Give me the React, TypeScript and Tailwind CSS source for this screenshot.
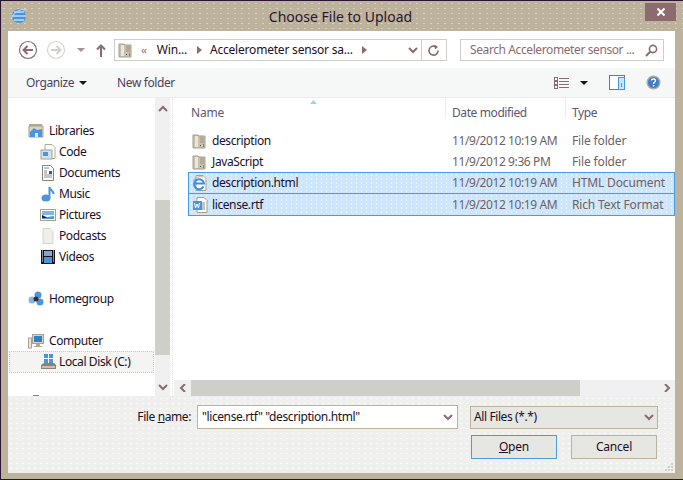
import React from "react";

const Folder = () => (
  <svg width="16" height="16" viewBox="0 0 16 16" className="shrink-0">
    <path d="M1 2h5l1 1h6v12H1z" fill="#c9c1ae" stroke="#a89f8c" />
    <rect x="3" y="3" width="3" height="11" fill="#e9e6dd" />
    <rect x="8" y="4" width="4" height="6" fill="#b4a994" />
    <rect x="11" y="11" width="1" height="3" fill="#4a95dc" />
    <rect x="8" y="12" width="1" height="1" fill="#555" />
  </svg>
);

const PageIe = () => (
  <svg width="16" height="16" viewBox="0 0 16 16" className="shrink-0">
    <path d="M4 .5h7l3 3v12H4z" fill="#fff" stroke="#a89f8c" />
    <path d="M11.500 11.500A5 5 0 1 1 12 8.500H2.500" fill="none" stroke="#3f8fe0" strokeWidth="2" />
    <path d="M1 6c2-4 7-5 10-4" fill="none" stroke="#b4a994" />
  </svg>
);

const PageWord = () => (
  <svg width="16" height="16" viewBox="0 0 16 16" className="shrink-0">
    <path d="M5 .5h7l3 3v12H5z" fill="#fff" stroke="#a89f8c" />
    <path d="M10 6h3M10 8h3M10 10h3M10 12h3" stroke="#8b8b8b" />
    <rect x="1" y="4" width="9" height="9" fill="#4a95dc" />
    <path d="M2.500 6l1 5 1.500-4 1.500 4 1-5" fill="none" stroke="#fff" />
  </svg>
);

const NavIcon = ({ kind }: { kind: string }) => {
  const common = { width: 16, height: 16, viewBox: "0 0 16 16", className: "shrink-0" };
  switch (kind) {
    case "libraries":
      return (
        <svg {...common}>
          <path d="M1 1h13v2H1z" fill="#b4a994" />
          <path d="M1 3h14v11H1z" fill="#d9d4c6" stroke="#a89f8c" />
          <path d="M2 9l4-4 3 2 5-1v8H2z" fill="#4a95dc" />
          <rect x="7" y="10" width="3" height="4" fill="#e9e6dd" />
        </svg>
      );
    case "code":
      return (
        <svg {...common}>
          <path d="M5 .5h7l3 3v11H5z" fill="#fff" stroke="#b4a994" />
          <rect x="1" y="6" width="11" height="9" fill="#cfe3f6" stroke="#a89f8c" />
          <rect x="3" y="8" width="5" height="4" fill="#4a95dc" />
        </svg>
      );
    case "documents":
      return (
        <svg {...common}>
          <path d="M2.500 .5h8l3 3v12h-11z" fill="#fff" stroke="#8c7f78" />
          <path d="M4 3h5" stroke="#4a95dc" />
          <path d="M4 6h3M4 8h3M4 10h8M4 12h8" stroke="#8b8b8b" />
          <rect x="9" y="6" width="3" height="3" fill="#3a5a8c" />
        </svg>
      );
    case "music":
      return (
        <svg {...common}>
          <ellipse cx="6" cy="12" rx="4.500" ry="3.500" fill="#4a95dc" />
          <path d="M9.500 12V1c0 3 4 3 4 7" fill="none" stroke="#4a95dc" strokeWidth="2" />
        </svg>
      );
    case "pictures":
      return (
        <svg {...common}>
          <rect x="0.5" y="2.500" width="15" height="11" fill="#fff" stroke="#a89f8c" />
          <rect x="2" y="4" width="12" height="4" fill="#7fb6e8" />
          <path d="M2 8l5 2 7-1v3H2z" fill="#4a95dc" />
          <path d="M2 8l5 3H2z" fill="#2a2030" />
        </svg>
      );
    case "podcasts":
      return (
        <svg {...common}>
          <path d="M3 .5h7l3 3v12H3z" fill="#f0efeb" stroke="#d9d4c6" />
        </svg>
      );
    case "videos":
      return (
        <svg {...common}>
          <rect x="1" y="1" width="14" height="14" fill="#1a1020" />
          <rect x="4" y="2" width="8" height="5" fill="#7fa9d0" />
          <rect x="4" y="8" width="8" height="6" fill="#4a95dc" />
          <path d="M2 2h1M2 4h1M2 6h1M2 8h1M2 10h1M2 12h1M13 2h1M13 4h1M13 6h1M13 8h1M13 10h1M13 12h1" stroke="#fff" />
        </svg>
      );
    case "homegroup":
      return (
        <svg {...common}>
          <circle cx="10" cy="4" r="3.500" fill="#4a95dc" />
          <circle cx="4" cy="9" r="3.500" fill="#7fb6e8" />
          <circle cx="12" cy="11" r="3.500" fill="#4a95dc" />
          <circle cx="8" cy="8" r="2.500" fill="#3a2a35" />
        </svg>
      );
    case "computer":
      return (
        <svg {...common}>
          <rect x="0.5" y="5" width="3" height="10" fill="#e9e6dd" stroke="#a89f8c" />
          <rect x="4.500" y="1.500" width="11" height="9" fill="#d9d4c6" stroke="#a89f8c" />
          <rect x="6" y="3" width="8" height="6" fill="#2f7fc9" />
          <path d="M8 11h4v2h2v1H6v-1h2z" fill="#b4a994" />
        </svg>
      );
    default:
      return (
        <svg {...common}>
          <rect x="4" y="0" width="4" height="4" fill="#4a95dc" />
          <rect x="9" y="0" width="4" height="4" fill="#4a95dc" />
          <rect x="4" y="5" width="4" height="4" fill="#4a95dc" />
          <rect x="9" y="5" width="4" height="4" fill="#4a95dc" />
          <path d="M1 11l3-2h10l2 2v4H1z" fill="#8c7f78" />
          <rect x="2" y="12" width="13" height="2" fill="#c9c1ae" />
        </svg>
      );
  }
};

const Caret = ({ color = "#1a0f26" }: { color?: string }) => (
  <svg width="8" height="4" viewBox="0 0 8 4" className="shrink-0">
    <path d="M0 0h8L4 4z" fill={color} />
  </svg>
);

const Chevron = ({ dir }: { dir: "up" | "down" | "left" | "right" }) => {
  const d = {
    up: "M1 6l4-4 4 4",
    down: "M1 2l4 4 4-4",
    left: "M7 0L3 4l4 4",
    right: "M3 0l4 4-4 4",
  }[dir];
  return (
    <svg width="10" height="8" viewBox="0 0 10 8" className="shrink-0">
      <path d={d} fill="none" stroke="#8b6b70" strokeWidth="2" />
    </svg>
  );
};

const navGroups = [
  { gap: "mt-[21px]", items: [["libraries", "Libraries", 0], ["code", "Code", 1], ["documents", "Documents", 1], ["music", "Music", 1], ["pictures", "Pictures", 1], ["podcasts", "Podcasts", 1], ["videos", "Videos", 1]] },
  { gap: "mt-[21px]", items: [["homegroup", "Homegroup", 0]] },
  { gap: "mt-[21px]", items: [["computer", "Computer", 0]] },
] as const;

const files = [
  { name: "description", date: "11/9/2012 10:19 AM", type: "File folder", icon: <Folder />, sel: false },
  { name: "JavaScript", date: "11/9/2012 9:36 PM", type: "File folder", icon: <Folder />, sel: false },
  { name: "description.html", date: "11/9/2012 10:19 AM", type: "HTML Document", icon: <PageIe />, sel: true },
  { name: "license.rtf", date: "11/9/2012 10:19 AM", type: "Rich Text Format", icon: <PageWord />, sel: true },
];

export default function App() {
  return (
    <div
      className="w-[683px] h-[480px] flex flex-col bg-[#bdb29c] border-l border-b border-t border-[#2a1530] overflow-hidden text-[12px] tracking-[-0.4px] text-[#1a0f26]"
      style={{ fontFamily: '"Noto Sans", sans-serif' }}
    >
      {/* Title bar */}
      <div className="h-[30px] shrink-0 flex items-start pl-[9px] pr-[7px] bg-[radial-gradient(#d6d0c0_1px,transparent_1px)] bg-[length:7px_5px]">
        <svg width="18" height="18" viewBox="0 0 18 18" className="mt-[6px] shrink-0">
          <circle cx="9" cy="9" r="7" fill="#3f97e6" />
          <path d="M2 9h14M4 5h10M4 13h10" stroke="#fff" />
          <path d="M1 12C5 3 13 1 17 3" fill="none" stroke="#bfe0f8" />
        </svg>
        <div className="flex-1 text-center text-[14px] tracking-normal leading-[31px] pl-[8px] text-[#2a1530]">Choose File to Upload</div>
        <div className="w-[31px] h-[18px] mt-[2px] bg-[#8b6b70] flex items-center justify-center">
          <svg width="8" height="8" viewBox="0 0 8 8">
            <path d="M0.5 0.5l7 7M7.500 0.5l-7 7" stroke="#fff" strokeWidth="2" />
          </svg>
        </div>
      </div>

      {/* Client */}
      <div className="ml-[7px] mr-[8px] flex-1 min-h-0 flex flex-col bg-white">
        {/* Address row */}
        <div className="h-[37px] shrink-0 flex items-center pl-[10px] pr-[11px] pt-[1px]">
          <svg width="20" height="20" viewBox="0 0 20 20" className="shrink-0">
            <circle cx="10" cy="10" r="8.500" fill="#fff" stroke="#8b6b70" strokeWidth="1.200" />
            <path d="M15 10H6M9.500 6l-4 4 4 4" fill="none" stroke="#8b6b70" strokeWidth="2" />
          </svg>
          <svg width="20" height="20" viewBox="0 0 20 20" className="ml-[8px] shrink-0">
            <circle cx="10" cy="10" r="8.500" fill="#fff" stroke="#d9d6cf" strokeWidth="1.200" />
            <path d="M5 10h9M10.500 6l4 4-4 4" fill="none" stroke="#d4d1ca" strokeWidth="2" />
          </svg>
          <div className="ml-[11px]"><Caret color="#a98d90" /></div>
          <svg width="10" height="13" viewBox="0 0 10 13" className="ml-[11px] shrink-0">
            <path d="M5 13V2M1 5.500L5 1.500l4 4" fill="none" stroke="#8b6b70" strokeWidth="2" />
          </svg>
          <div className="ml-[8px] w-[333px] h-[22px] shrink-0 flex items-center border border-[#cfcfca]">
            <div className="ml-[3px]"><Folder /></div>
            <span className="ml-[7px] text-[#8b6b70] text-[11px] tracking-[-1px]">‹‹</span>
            <span className="ml-[11px] tracking-[-0.2px]">Win...</span>
            <svg width="5" height="8" viewBox="0 0 5 8" className="ml-[10px]"><path d="M0 0l5 4-5 4z" fill="#8b6b70" /></svg>
            <span className="ml-[8px] whitespace-nowrap tracking-[-0.2px]">Accelerometer sensor sa...</span>
            <svg width="5" height="8" viewBox="0 0 5 8" className="ml-[9px]"><path d="M0 0l5 4-5 4z" fill="#8b6b70" /></svg>
            <div className="flex-1" />
            <Chevron dir="down" />
            <div className="ml-[3px] w-[25px] h-full border-l border-[#cfcfca] flex items-center justify-center">
              <svg width="12" height="13" viewBox="0 0 12 13">
                <path d="M10 6.500a4.500 4.500 0 1 1-2-3.600" fill="none" stroke="#8b6b70" strokeWidth="1.600" />
                <path d="M6.500 0.500l3.500 2.500-3 2.500z" fill="#8b6b70" />
              </svg>
            </div>
          </div>
          <div className="ml-[13px] flex-1 h-[22px] flex items-center border border-[#cfcfca] pl-[9px] pr-[5px] text-[#8b6b70]">
            <span className="flex-1 whitespace-nowrap overflow-hidden">Search Accelerometer sensor ...</span>
            <svg width="13" height="13" viewBox="0 0 13 13" className="shrink-0">
              <circle cx="8" cy="5" r="3.600" fill="none" stroke="#8b6b70" strokeWidth="1.600" />
              <path d="M5.500 7.500L1 12" stroke="#8b6b70" strokeWidth="2" />
            </svg>
          </div>
        </div>

        {/* Toolbar */}
        <div className="h-[30px] shrink-0 flex items-center bg-[#f6f7f7] border-b border-[#e3eef8] pl-[18px] pr-[14px]">
          <span className="text-[#4a4360]">Organize</span>
          <div className="ml-[5px]"><Caret /></div>
          <span className="ml-[30px] text-[#4a4360]">New folder</span>
          <div className="flex-1" />
          <svg width="15" height="12" viewBox="0 0 15 12" className="shrink-0">
            <path d="M5 1.500h10M5 4.500h10M5 7.500h10M5 10.500h10" stroke="#8b6b70" />
            <rect x="0.5" y="0.5" width="3" height="3" fill="#fff" stroke="#8b6b70" />
            <rect x="0.5" y="4.500" width="3" height="3" fill="#fff" stroke="#8b6b70" />
            <rect x="0.5" y="8.500" width="3" height="3" fill="#fff" stroke="#8b6b70" />
          </svg>
          <div className="ml-[11px]"><Caret /></div>
          <svg width="16" height="15" viewBox="0 0 16 15" className="ml-[21px] shrink-0">
            <rect x="0.5" y="0.5" width="15" height="14" fill="#fff" stroke="#8b6b70" />
            <rect x="9.500" y="2.500" width="6" height="12" fill="#cfe3f6" stroke="#3f97e6" />
            <path d="M12.500 8v4" stroke="#3f97e6" />
          </svg>
          <svg width="15" height="15" viewBox="0 0 15 15" className="ml-[21px] shrink-0">
            <circle cx="7.500" cy="7.500" r="7" fill="#b4a994" />
            <circle cx="7.500" cy="7.500" r="5.500" fill="#3f7fc9" />
            <path d="M5.500 5.500c0-2 4-2 4 0s-2 1.500-2 3.500" fill="none" stroke="#fff" strokeWidth="1.300" />
            <rect x="6.800" y="10" width="1.500" height="1.500" fill="#fff" />
          </svg>
        </div>

        {/* Main */}
        <div className="h-[298px] shrink-0 flex">
          {/* Sidebar */}
          <div className="w-[147px] shrink-0 overflow-hidden pt-[11px] pl-[1px] pr-[1px]">
            {navGroups.map((g, i) => (
              <div key={i} className={i === 0 ? "mt-[11px]" : g.gap}>
                {g.items.map(([icon, label, indent]) => (
                  <div key={label} className={`h-[21px] flex items-center whitespace-nowrap ${indent ? "pl-[31px] gap-[3px]" : "pl-[19px] gap-[5px]"}`}>
                    <NavIcon kind={icon} />
                    <span>{label}</span>
                  </div>
                ))}
              </div>
            ))}
            <div className="h-[22px] flex items-center gap-[3px] pl-[30px] border border-dotted border-[#c8c8c4] bg-[#f4f4f3] whitespace-nowrap">
              <NavIcon kind="disk" />
              <span>Local Disk (C:)</span>
            </div>
            <div className="mt-[22px] ml-[24px] w-[6px] h-[2px] bg-[#4a95dc]" />
          </div>

          {/* Sidebar scrollbar */}
          <div className="w-[15px] shrink-0 bg-[#f0f0f0] flex flex-col items-center">
            <div className="h-[17px] pt-[4px] flex items-center"><Chevron dir="up" /></div>
            <div className="flex-1 w-full mt-[85px] flex flex-col">
              <div className="h-[155px] bg-[#cfcfca]" />
            </div>
            <div className="h-[17px] flex items-center pb-[1px]"><Chevron dir="down" /></div>
          </div>
          <div className="w-[3px] shrink-0 bg-white border-r border-dotted border-[#e4e4e2]" />

          {/* List */}
          <div className="flex-1 min-w-0 flex flex-col pl-[1px]">
            <div className="h-[20px] shrink-0 flex text-[#5d5670] whitespace-nowrap">
              <div className="w-[272px] pl-[17px] pt-[5px] leading-[20px] relative border-r border-[#e3eef8] tracking-[-0.2px]">
                Name
                <svg width="7" height="4" viewBox="0 0 7 4" className="absolute top-[2px] left-[136px]">
                  <path d="M0 4l3.500-4L7 4z" fill="#a9cdee" />
                </svg>
              </div>
              <div className="w-[120px] pl-[6px] pt-[5px] leading-[20px] border-r border-[#e3eef8]">Date modified</div>
              <div className="pl-[6px] pt-[5px] leading-[20px]">Type</div>
            </div>
            <div className="flex-1 min-h-0 pt-[12px] pl-[14px] overflow-hidden">
              {files.map((f, i) => (
                <div
                  key={f.name}
                  className={`flex items-center whitespace-nowrap h-[21px] ${
                    f.sel
                      ? `bg-[#cde6fb] border-x border-b border-[#4a9be0] ${i === 2 ? "border-t h-[22px]" : "h-[22px]"} bg-[radial-gradient(#e6f2fc_1px,transparent_1px)] bg-[length:5px_4px]`
                      : "border-x border-transparent"
                  }`}
                >
                  <div className="w-[263px] flex items-center gap-[4px] pl-[3px]">
                    {f.icon}
                    <span>{f.name}</span>
                  </div>
                  <div className="w-[120px] text-[#6e5f66]">{f.date}</div>
                  <div className="text-[#6e5f66] tracking-[-0.15px]">{f.type}</div>
                </div>
              ))}
            </div>
            <div className="h-[16px] shrink-0 flex items-center bg-[#f0f0f0]">
              <div className="w-[17px] flex justify-center"><Chevron dir="left" /></div>
              <div className="w-[389px] h-full bg-[#cfcfca]" />
              <div className="flex-1" />
              <div className="w-[17px] flex justify-center"><Chevron dir="right" /></div>
            </div>
          </div>
        </div>

        {/* Bottom panel */}
        <div className="flex-1 min-h-0 relative bg-[#efefee] bg-[radial-gradient(#fafaf9_0.7px,transparent_1px)] bg-[length:6px_5px] pt-[9px]">
          <div className="flex items-center pr-[17px]">
            <div className="w-[183px] text-right whitespace-nowrap">
              File <span className="underline">n</span>ame:
            </div>
            <div className="ml-[6px] w-[261px] h-[24px] border border-[#bdb29c] bg-white flex items-center pl-[4px] pr-[4px] whitespace-nowrap">
              <span className="flex-1">"license.rtf" "description.html"</span>
              <Chevron dir="down" />
            </div>
            <div className="ml-[12px] flex-1 h-[23px] border border-[#bdb29c] bg-[#e6e6e3] flex items-center pl-[3px] pr-[3px]">
              <span className="flex-1">All Files (*.*)</span>
              <Chevron dir="down" />
            </div>
          </div>
          <div className="mt-[6px] flex justify-end gap-[14px] pr-[18px] tracking-[-0.2px]">
            <div className="w-[86px] h-[24px] border border-[#4a9be0] bg-[#e6e6e3] flex items-center justify-center">
              <span><span className="underline">O</span>pen</span>
            </div>
            <div className="w-[86px] h-[24px] border border-[#bdb29c] bg-[#e6e6e3] flex items-center justify-center">
              Cancel
            </div>
          </div>
          <svg width="9" height="9" viewBox="0 0 9 9" className="absolute right-[1px] bottom-[1px]">
            <path d="M6 0h2v2H6zM3 3h2v2H3zM6 3h2v2H6zM0 6h2v2H0zM3 6h2v2H3zM6 6h2v2H6z" fill="#cfcfca" />
          </svg>
        </div>
      </div>
      <div className="h-[6px] shrink-0" />
    </div>
  );
}
